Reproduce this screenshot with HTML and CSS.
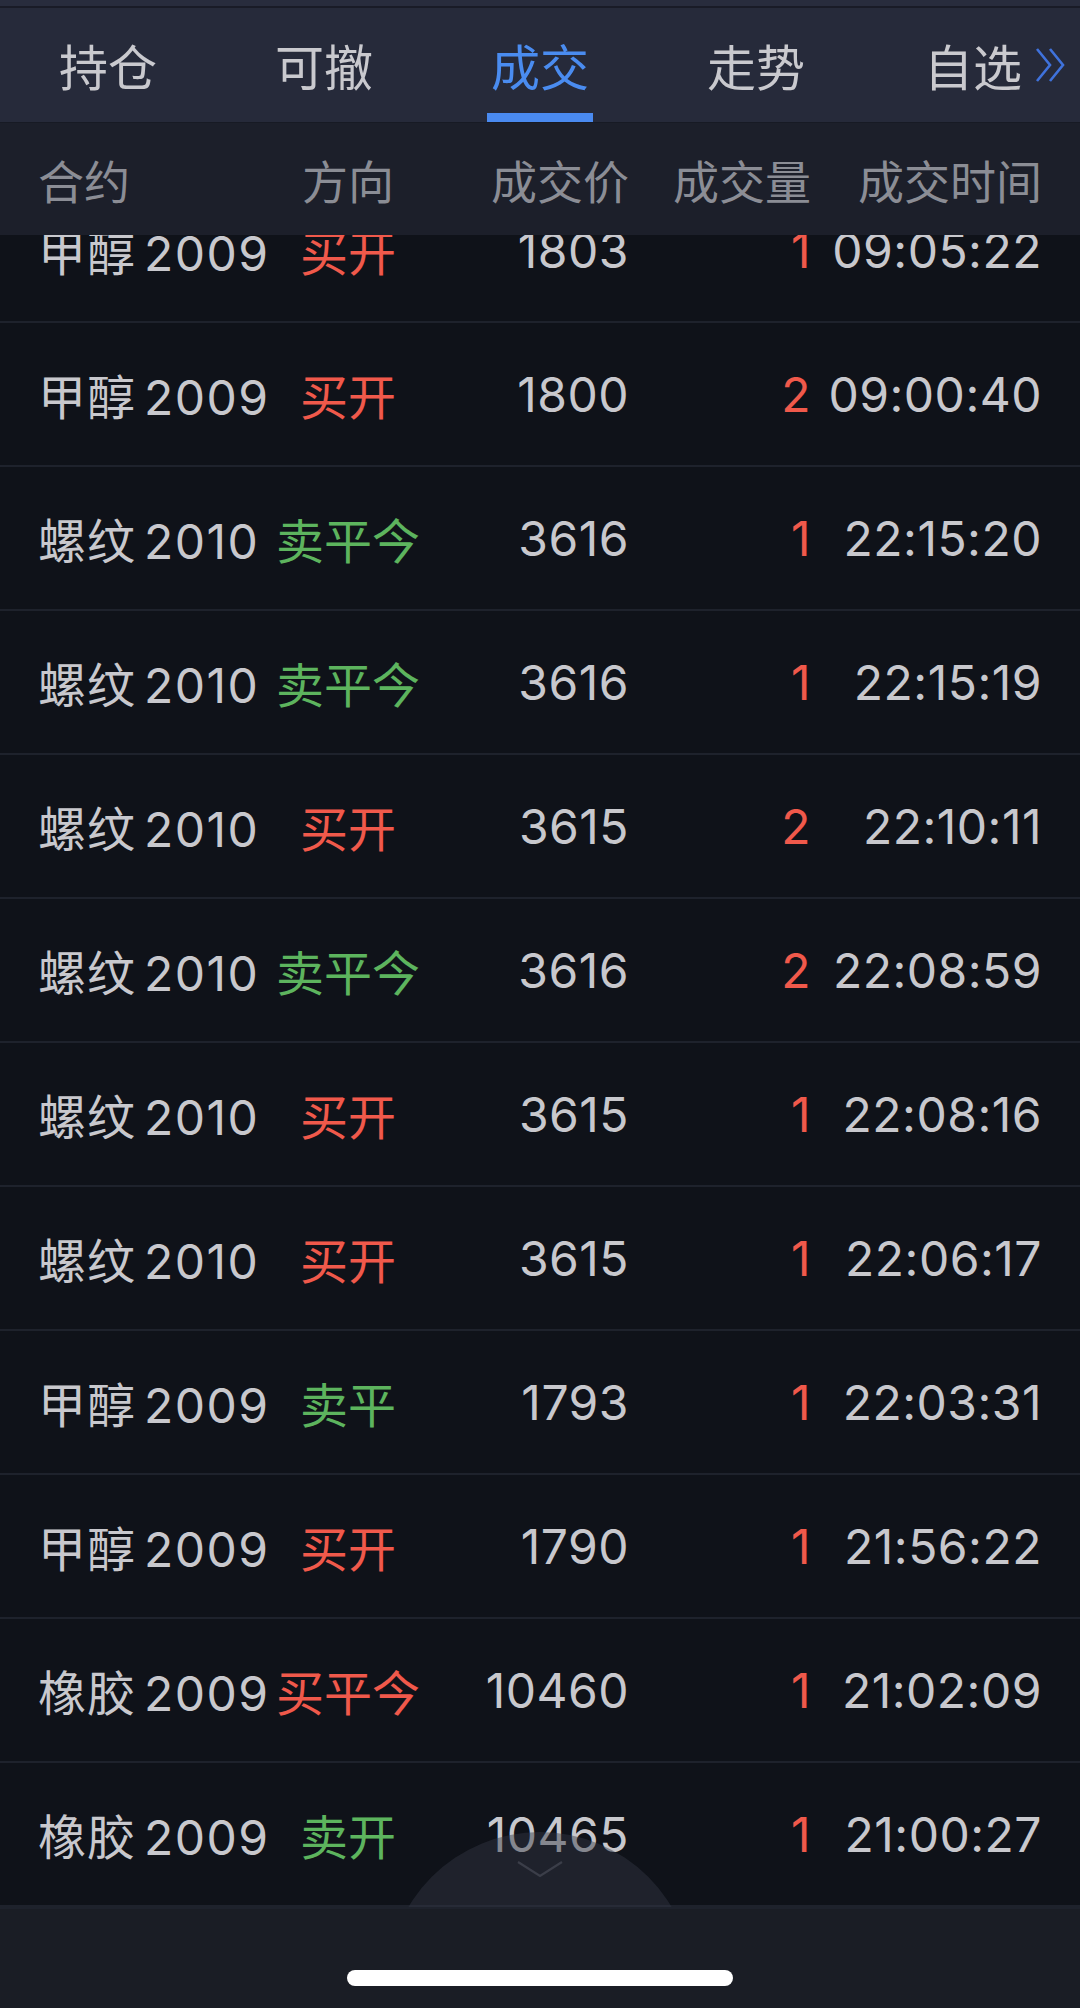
FILE: index.html
```html
<!DOCTYPE html>
<html lang="zh-CN">
<head>
<meta charset="utf-8">
<title>成交</title>
<link rel="stylesheet" href="styles.css">
</head>
<body>
<div class="screen">
  <nav class="tabs">
    <div class="tab">持仓</div>
    <div class="tab">可撤</div>
    <div class="tab active">成交</div>
    <div class="tab">走势</div>
    <div class="tab tab-last">自选<svg class="more" viewBox="0 0 34 36" width="34" height="36"><path d="M3 2 L16 18 L3 34 M16 2 L29 18 L16 34" fill="none" stroke="#3f72dc" stroke-width="2.6"/></svg></div>
  </nav>
  <div class="head grid">
    <span class="c1">合约</span>
    <span class="c2">方向</span>
    <span class="c3">成交价</span>
    <span class="c4">成交量</span>
    <span class="c5">成交时间</span>
  </div>
  <div class="list">
    <div class="rows">
      <div class="row grid"><span class="c1"><span class="nm">甲醇</span><span class="cd">2009</span></span><span class="c2 red">买开</span><span class="c3">1803</span><span class="c4 red">1</span><span class="c5">09:05:22</span></div>
      <div class="row grid"><span class="c1"><span class="nm">甲醇</span><span class="cd">2009</span></span><span class="c2 red">买开</span><span class="c3">1800</span><span class="c4 red">2</span><span class="c5">09:00:40</span></div>
      <div class="row grid"><span class="c1"><span class="nm">螺纹</span><span class="cd">2010</span></span><span class="c2 green">卖平今</span><span class="c3">3616</span><span class="c4 red">1</span><span class="c5">22:15:20</span></div>
      <div class="row grid"><span class="c1"><span class="nm">螺纹</span><span class="cd">2010</span></span><span class="c2 green">卖平今</span><span class="c3">3616</span><span class="c4 red">1</span><span class="c5">22:15:19</span></div>
      <div class="row grid"><span class="c1"><span class="nm">螺纹</span><span class="cd">2010</span></span><span class="c2 red">买开</span><span class="c3">3615</span><span class="c4 red">2</span><span class="c5">22:10:11</span></div>
      <div class="row grid"><span class="c1"><span class="nm">螺纹</span><span class="cd">2010</span></span><span class="c2 green">卖平今</span><span class="c3">3616</span><span class="c4 red">2</span><span class="c5">22:08:59</span></div>
      <div class="row grid"><span class="c1"><span class="nm">螺纹</span><span class="cd">2010</span></span><span class="c2 red">买开</span><span class="c3">3615</span><span class="c4 red">1</span><span class="c5">22:08:16</span></div>
      <div class="row grid"><span class="c1"><span class="nm">螺纹</span><span class="cd">2010</span></span><span class="c2 red">买开</span><span class="c3">3615</span><span class="c4 red">1</span><span class="c5">22:06:17</span></div>
      <div class="row grid"><span class="c1"><span class="nm">甲醇</span><span class="cd">2009</span></span><span class="c2 green">卖平</span><span class="c3">1793</span><span class="c4 red">1</span><span class="c5">22:03:31</span></div>
      <div class="row grid"><span class="c1"><span class="nm">甲醇</span><span class="cd">2009</span></span><span class="c2 red">买开</span><span class="c3">1790</span><span class="c4 red">1</span><span class="c5">21:56:22</span></div>
      <div class="row grid"><span class="c1"><span class="nm">橡胶</span><span class="cd">2009</span></span><span class="c2 red">买平今</span><span class="c3">10460</span><span class="c4 red">1</span><span class="c5">21:02:09</span></div>
      <div class="row grid"><span class="c1"><span class="nm">橡胶</span><span class="cd">2009</span></span><span class="c2 green">卖开</span><span class="c3">10465</span><span class="c4 red">1</span><span class="c5">21:00:27</span></div>
    </div>
    <div class="pull">
      <div class="pull-disc"></div>
      <svg class="pull-arrow" viewBox="0 0 48 18" width="48" height="18"><path d="M2 2 L24 16 L46 2" fill="none" stroke="#3b3e49" stroke-width="2.2"/></svg>
    </div>
  </div>
  <div class="bottom">
    <div class="home-bar"></div>
  </div>
</div>
</body>
</html>
```
FILE: styles.css
```css
html, body {
  margin: 0;
  padding: 0;
  background: #0f1219;
}
.screen {
  width: 1080px;
  height: 2008px;
  overflow: hidden;
  display: flex;
  flex-direction: column;
  font-family: "Inter", "Noto Sans CJK SC", sans-serif;
  color: #c8c8cd;
}
.tabs {
  height: 116px;
  flex: none;
  background: #262a3a;
  border-top: 6px solid #282c3d;
  box-shadow: inset 0 2px 0 #191b27;
  display: flex;
}
.tab {
  width: 216px;
  flex: none;
  position: relative;
  display: flex;
  align-items: center;
  justify-content: center;
  font-size: 49px;
  color: #c9c9ce;
  font-family: "Noto Sans CJK SC", sans-serif;
  padding-top: 0;
  box-sizing: border-box;
}
.tab.active {
  color: #4a8cf0;
}
.tab.active::after {
  content: "";
  position: absolute;
  left: 55px;
  width: 106px;
  bottom: 0;
  height: 9px;
  background: #4a8af0;
}
.tab-last {
  justify-content: flex-start;
  padding-left: 60px;
}
.more {
  margin-left: 12px;
  margin-top: 2px;
}
.grid {
  display: grid;
  grid-template-columns: 237px 146px 208px 182px 231px;
  padding: 0 38px;
  align-items: center;
  white-space: nowrap;
}
.c1 { text-align: left; }
.c2 { text-align: center; }
.c3, .c4, .c5 { text-align: right; }
.head {
  height: 113px;
  flex: none;
  background: #1c1f2a;
  font-size: 46px;
  color: #8b8d95;
  font-family: "Noto Sans CJK SC", sans-serif;
  box-shadow: inset 0 1px 0 #171a24;
}
.list {
  flex: none;
  height: 1672px;
  overflow: hidden;
  position: relative;
}
.rows {
  margin-top: -56px;
}
.row {
  height: 142px;
  border-bottom: 2px solid #1e222c;
  font-size: 48px;
}
.nm {
  font-family: "Noto Sans CJK SC", sans-serif;
  letter-spacing: 1px;
}
.cd {
  margin-left: 8px;
  letter-spacing: 1.5px;
}
.row .c5, .row .c3, .row .c4 {
  letter-spacing: 0.5px;
}
.red { color: #f0594b; }
.green { color: #5db45e; }
.row .red, .row .green {
  font-family: "Noto Sans CJK SC", sans-serif;
}
.row .c4.red {
  font-family: "Inter", sans-serif;
}
.pull {
  position: absolute;
  left: 408px;
  bottom: 0;
  width: 264px;
  height: 75px;
  overflow: hidden;
}
.pull-disc {
  position: absolute;
  left: -21px;
  top: 0;
  width: 306px;
  height: 306px;
  border-radius: 50%;
  background: rgba(52, 56, 68, 0.45);
}
.pull-arrow {
  position: absolute;
  left: 108px;
  top: 28px;
}
.bottom {
  flex: 1;
  background: #1a1d25;
  display: flex;
  justify-content: center;
  border-top: 2px solid #1e222c;
}
.home-bar {
  margin-top: 61px;
  width: 386px;
  height: 16px;
  border-radius: 8px;
  background: #ffffff;
}
```
